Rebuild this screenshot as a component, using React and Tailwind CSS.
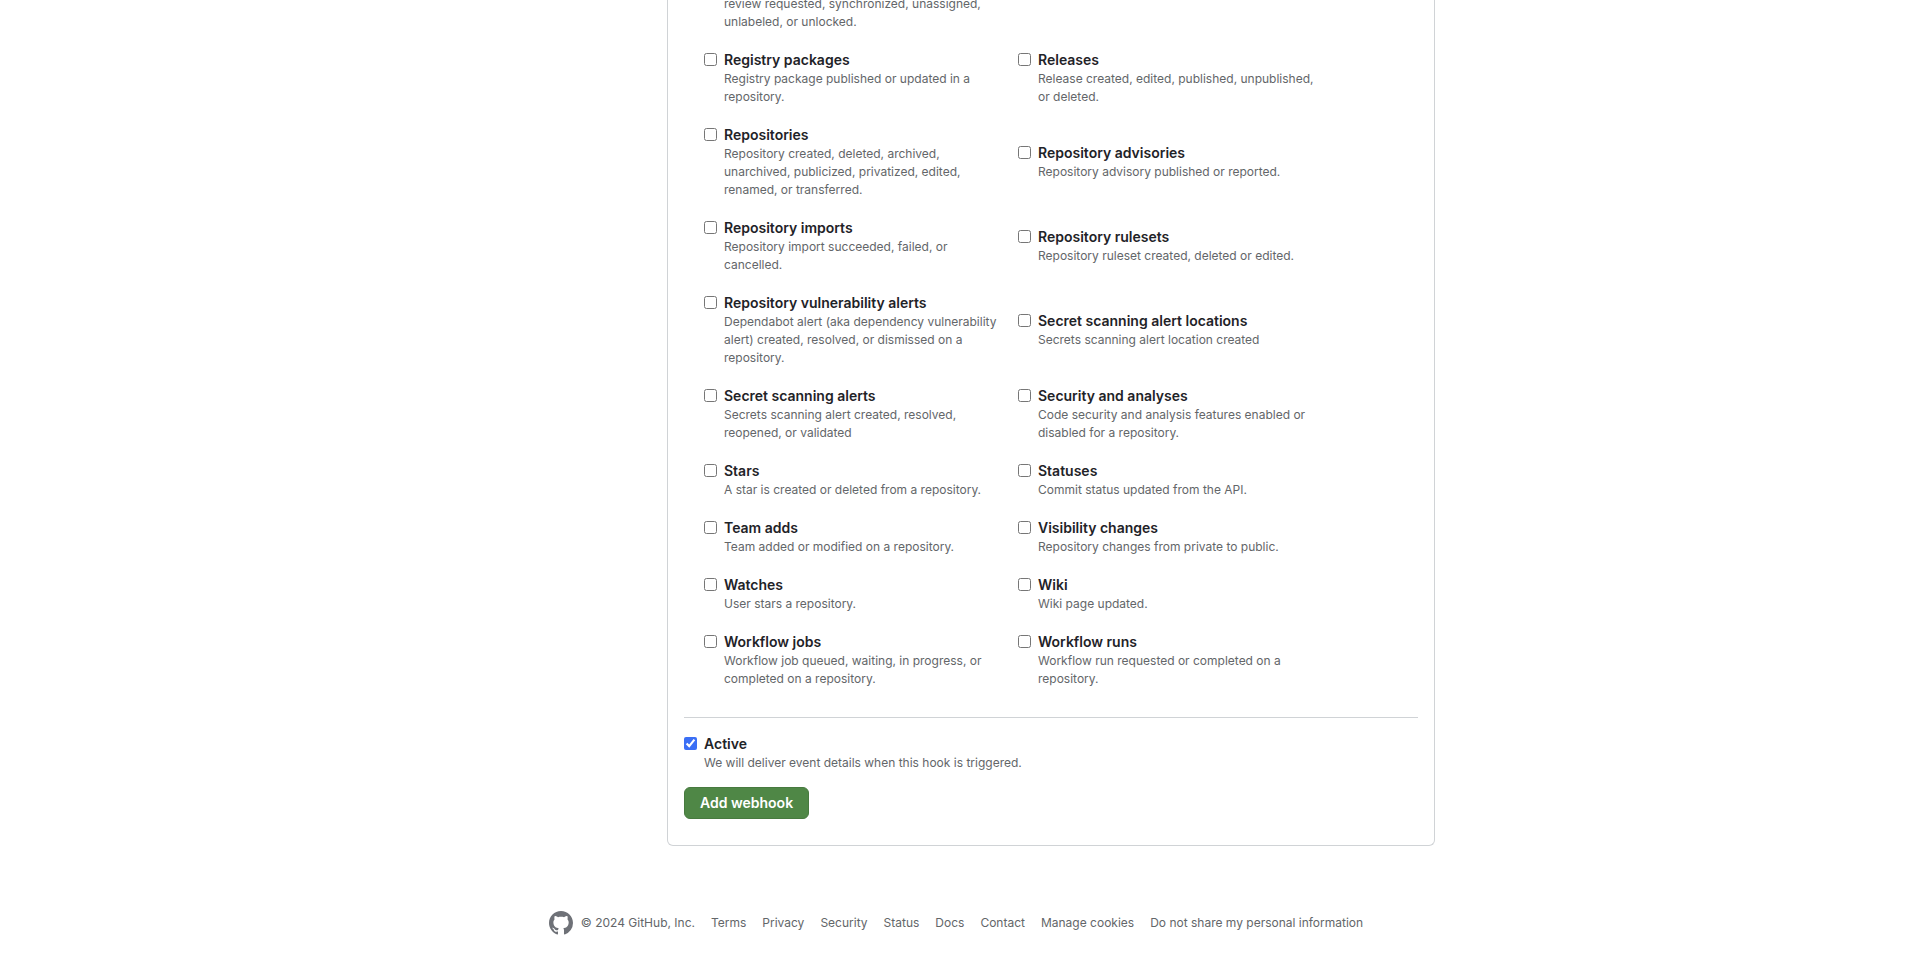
const events = [
  { id: "registry_package", title: "Registry packages", desc: "Registry package published or updated in a repository." },
  { id: "release", title: "Releases", desc: "Release created, edited, published, unpublished, or deleted." },
  { id: "repository", title: "Repositories", desc: "Repository created, deleted, archived, unarchived, publicized, privatized, edited, renamed, or transferred." },
  { id: "repository_advisory", title: "Repository advisories", desc: "Repository advisory published or reported." },
  { id: "repository_import", title: "Repository imports", desc: "Repository import succeeded, failed, or cancelled." },
  { id: "repository_ruleset", title: "Repository rulesets", desc: "Repository ruleset created, deleted or edited." },
  { id: "vulnerability_alert", title: "Repository vulnerability alerts", desc: "Dependabot alert (aka dependency vulnerability alert) created, resolved, or dismissed on a repository." },
  { id: "secret_alert_location", title: "Secret scanning alert locations", desc: "Secrets scanning alert location created" },
  { id: "secret_alert", title: "Secret scanning alerts", desc: "Secrets scanning alert created, resolved, reopened, or validated" },
  { id: "security_and_analysis", title: "Security and analyses", desc: "Code security and analysis features enabled or disabled for a repository." },
  { id: "star", title: "Stars", desc: "A star is created or deleted from a repository." },
  { id: "status", title: "Statuses", desc: "Commit status updated from the API." },
  { id: "team_add", title: "Team adds", desc: "Team added or modified on a repository." },
  { id: "public", title: "Visibility changes", desc: "Repository changes from private to public." },
  { id: "watch", title: "Watches", desc: "User stars a repository." },
  { id: "wiki", title: "Wiki", desc: "Wiki page updated." },
  { id: "workflow_job", title: "Workflow jobs", desc: "Workflow job queued, waiting, in progress, or completed on a repository." },
  { id: "workflow_run", title: "Workflow runs", desc: "Workflow run requested or completed on a repository." },
];

const footerLinks = [
  "Terms",
  "Privacy",
  "Security",
  "Status",
  "Docs",
  "Contact",
  "Manage cookies",
  "Do not share my personal information",
];

function GitHubMark() {
  return (
    <svg viewBox="0 0 16 16" fill="currentColor" className="h-6 w-6 text-[#6e7177]" aria-hidden="true">
      <path d="M8 0C3.58 0 0 3.58 0 8c0 3.54 2.29 6.53 5.47 7.59.4.07.55-.17.55-.38 0-.19-.01-.82-.01-1.49-2.01.37-2.53-.49-2.69-.94-.09-.23-.48-.94-.82-1.13-.28-.15-.68-.52-.01-.53.63-.01 1.08.58 1.23.82.72 1.21 1.87.87 2.33.66.07-.52.28-.87.51-1.07-1.78-.2-3.64-.89-3.64-3.95 0-.87.31-1.59.82-2.15-.08-.2-.36-1.02.08-2.12 0 0 .67-.21 2.2.82.64-.18 1.32-.27 2-.27.68 0 1.36.09 2 .27 1.53-1.04 2.2-.82 2.2-.82.44 1.1.16 1.92.08 2.12.51.56.82 1.27.82 2.15 0 3.07-1.87 3.75-3.65 3.95.29.25.54.73.54 1.48 0 1.07-.01 1.93-.01 2.2 0 .21.15.46.55.38A8.013 8.013 0 0 0 16 8c0-4.42-3.58-8-8-8z" />
    </svg>
  );
}

function CheckboxField({ id, title, desc, checked = false }) {
  return (
    <div className="flex items-start gap-[7px]">
      <input
        type="checkbox"
        id={id}
        defaultChecked={checked}
        aria-describedby={id + "_desc"}
        className="mt-1 h-[13px] w-[13px] shrink-0 accent-[#3b6ff5]"
      />
      <div>
        <label htmlFor={id} className="block text-sm leading-[21px] font-semibold text-[#1f2328]">
          {title}
        </label>
        <p id={id + "_desc"} className="text-xs leading-[18px] text-[#636669]">
          {desc}
        </p>
      </div>
    </div>
  );
}

export default function App() {
  return (
    <div className="bg-white font-[Inter,'Liberation_Sans',sans-serif] text-[#1f2328]">
      <main className="mx-auto flex max-w-[958px] justify-end">
        <form className="w-full max-w-3xl rounded-b-md border border-t-0 border-[#d0d3d6] px-4 pb-[26px]">
          <div className="px-5 pb-[29px]">
            {/* Tail of the pull request event, cut off by the scroll position */}
            <div className="mb-[18px] flex h-[31px] w-[298px] items-end overflow-hidden pl-5">
              <p className="text-xs leading-[18px] text-[#636669]">
                review requested, synchronized, unassigned, unlabeled, or unlocked.
              </p>
            </div>
            <div className="grid grid-cols-[298px_298px] items-center gap-x-4 gap-y-[18px]">
              {events.map((event) => (
                <CheckboxField key={event.id} {...event} />
              ))}
            </div>
          </div>
          <div className="border-t border-[#d0d3d6] pt-[15px]">
            <CheckboxField
              id="active"
              title="Active"
              desc="We will deliver event details when this hook is triggered."
              checked
            />
            <button
              type="submit"
              className="mt-[15px] h-8 rounded-md border border-[#477a3f] bg-[#4f8746] px-[15px] text-sm font-semibold text-white"
            >
              Add webhook
            </button>
          </div>
        </form>
      </main>
      {/* Footer */}
      <footer className="flex items-center justify-center gap-2 pt-[65px] pb-9 text-xs leading-[18px] text-[#636669]">
        <a href="#" aria-label="GitHub homepage">
          <GitHubMark />
        </a>
        <span>© 2024 GitHub, Inc.</span>
        <ul className="ml-2 flex flex-wrap gap-4">
          {footerLinks.map((link) => (
            <li key={link}>
              <a href="#">{link}</a>
            </li>
          ))}
        </ul>
      </footer>
    </div>
  );
}
